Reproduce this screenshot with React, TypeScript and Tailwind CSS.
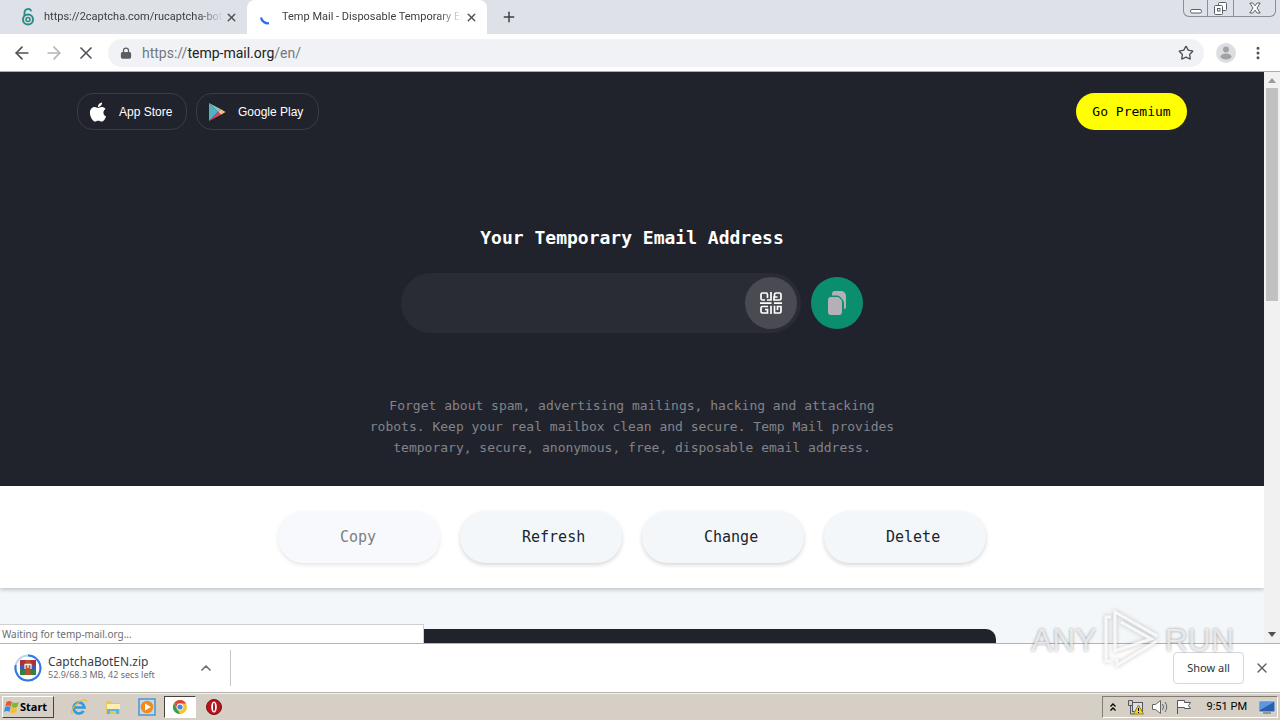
import type { ReactNode } from "react";
import { ArrowLeft, ArrowRight, ChevronUp, Lock, MoreVertical, Plus, Star, X } from "lucide-react";
import { FaApple } from "react-icons/fa";

function PadlockFavicon() {
  return (
    <svg viewBox="0 0 16 18" className="h-[18px] w-4 shrink-0" fill="none" stroke="#2b8c86">
      <path d="M4.500 8V4.500a3.500 3.500 0 0 1 6.800-1.200" strokeWidth="1.800" />
      <circle cx="8" cy="11.500" r="5" strokeWidth="2" />
      <circle cx="8" cy="11.500" r="2" strokeWidth="1.600" />
    </svg>
  );
}

function LoadingArc() {
  return (
    <svg viewBox="0 0 16 16" className="size-4 shrink-0" fill="none">
      <path d="M3 8.500A7 7 0 0 0 11 14.200" stroke="#2a6ff0" strokeWidth="2.200" />
    </svg>
  );
}

function PlayIcon() {
  return (
    <svg viewBox="0 0 18 20" className="h-5 w-[18px]">
      <path d="M1 1v18l9-9z" fill="#4fb3c4" />
      <path d="M1 1l12 6.200-3 2.800z" fill="#7fc6c2" />
      <path d="M13 7.200l4.500 2.800-4.500 2.800-3-2.800z" fill="#f3c07a" />
      <path d="M1 19l12-6.200-3-2.800z" fill="#dc4668" />
    </svg>
  );
}

function QrIcon() {
  return (
    <svg viewBox="0 0 22 22" className="size-[22px]" fill="none" stroke="#fff" strokeWidth="1.700">
      <path d="M5 8H2.500A1.500 1.500 0 0 1 1 6.500V2.500A1.500 1.500 0 0 1 2.500 1h3.500A1.500 1.500 0 0 1 7.500 2.500V6" />
      <path d="M11 0v8H7" />
      <path d="M14.500 5V2.500A1.500 1.500 0 0 1 16 1h3.500A1.500 1.500 0 0 1 21 2.500V6.500A1.500 1.500 0 0 1 19.500 8H14V5h3.500" />
      <path d="M0 11.200h11.500M14 11.200h8" />
      <path d="M8 14.500H2.500A1.500 1.500 0 0 0 1 16v3.500A1.500 1.500 0 0 0 2.500 21H7.500v-3.500H5" />
      <path d="M11 13.800V22" />
      <path d="M14.500 13.800V21h5a1.500 1.500 0 0 0 1.500-1.500V14.500h-3.500V18" />
    </svg>
  );
}

function CopyIcon() {
  return (
    <svg viewBox="0 0 20 26" className="h-[26px] w-5" fill="#b5b0b8">
      <path d="M5 5.500V4a3 3 0 0 1 3-3h5.500a5 5 0 0 1 5.500 5.500V17a2 2 0 0 1-2 2V13a6 6 0 0 0-2-4l-2-2.200a4 4 0 0 0-3-1.300z" />
      <path d="M4 7h6a4 4 0 0 1 2.800 1.200l1.200 1.400a4 4 0 0 1 1 2.600V22a3 3 0 0 1-3 3H4a3 3 0 0 1-3-3V10a3 3 0 0 1 3-3z" />
    </svg>
  );
}

function ArchiveIcon() {
  return (
    <svg viewBox="0 0 28 28" className="size-7 shrink-0">
      <circle cx="14" cy="14" r="12.500" fill="#fff" stroke="#bcd2f5" strokeWidth="2" />
      <path d="M14 1.500a12.500 12.500 0 1 1-12.200 9.500" fill="none" stroke="#3477e4" strokeWidth="2" />
      <rect x="6" y="6" width="16" height="5" fill="#a8323c" />
      <rect x="6" y="11" width="16" height="5" fill="#3d58b8" />
      <rect x="6" y="16" width="16" height="5" fill="#328140" />
      <rect x="11.500" y="6" width="5" height="15" fill="#b9512f" />
      <path d="M11 15v-4.500h6V15M14 10.500V14" fill="none" stroke="#f4efe8" strokeWidth="1.300" />
    </svg>
  );
}

function WindowsFlag() {
  return (
    <svg viewBox="0 0 16 16" className="size-4 shrink-0">
      <path d="M2.500 3C4.500 1.500 6 1.800 8 3L6.800 7.500C5 6.300 3.500 6.200 1.300 7.500z" fill="#e8582c" />
      <path d="M8.700 3.300c2 1 3.800 1 6-.3l-1.300 4.800c-2 1.200-4 1.200-5.900.1z" fill="#7ab83a" />
      <path d="M1.100 8.300c2-1.300 3.700-1.300 5.500-.1l-1.200 4.600C3.500 11.600 2 11.700 0 13z" fill="#3b8ed8" />
      <path d="M7.300 8.600c2 1.100 3.800 1 5.900-.1L12 13.100c-2 1.200-4 1.200-5.900.1z" fill="#f7bd2b" />
    </svg>
  );
}

function ExplorerIcon() {
  return (
    <svg viewBox="0 0 18 18" className="size-[18px]" fill="none">
      <path d="M4 9.500h10.500A5.500 5.500 0 1 0 13.600 13" stroke="#2f9ade" strokeWidth="2.600" />
      <path d="M2.500 15.500C0 14 4 7 9 4s8-3 7.500 0" stroke="#e8b93c" strokeWidth="1.200" />
    </svg>
  );
}

function FolderIcon() {
  return (
    <svg viewBox="0 0 18 18" className="size-[18px]">
      <path d="M2 3h5l1.500 2H16v11H2z" fill="#e9c65c" />
      <path d="M3 6h13v5H3z" fill="#fbeeb0" />
      <path d="M3 16v-5h12v5h-3v-3H6v3z" fill="#5fb3df" />
    </svg>
  );
}

function MediaIcon() {
  return (
    <svg viewBox="0 0 18 18" className="size-[18px]">
      <rect x="1" y="1" width="16" height="16" fill="#bcdcf5" stroke="#4f94cb" strokeWidth="1.500" />
      <circle cx="9" cy="9" r="6.300" fill="#f28a1c" />
      <path d="M7 5.500v7L13 9z" fill="#fff" />
    </svg>
  );
}

function ChromeIcon() {
  return (
    <svg viewBox="0 0 16 16" className="size-4">
      <circle cx="8" cy="8" r="7" fill="#f5c52b" />
      <path d="M1.900 4.600A7 7 0 0 1 14.100 4.600H8z" fill="#dc4335" />
      <path d="M1.900 4.500 5 9.800 8 15A7 7 0 0 1 1.900 4.500z" fill="#2f9e52" />
      <path d="M2 4.500h6v3.500H4.500z" fill="#dc4335" />
      <circle cx="8" cy="8" r="3.400" fill="#fff" />
      <circle cx="8" cy="8" r="2.600" fill="#4384ea" />
    </svg>
  );
}

function OperaIcon() {
  return (
    <svg viewBox="0 0 18 18" className="size-[18px]">
      <circle cx="9" cy="9" r="7.500" fill="#b3161c" stroke="#7c0c10" />
      <ellipse cx="9" cy="9" rx="2.800" ry="5.500" fill="#fff" />
      <ellipse cx="9" cy="9" rx="1" ry="4.300" fill="#a5161b" />
    </svg>
  );
}

function Tab({ icon, title, active }: { icon: ReactNode; title: string; active?: boolean }) {
  return (
    <div className={active ? "flex h-full w-60 items-center rounded-t-lg bg-white pr-2 pl-[11px]" : "flex h-full w-[247px] items-center pr-2 pl-5"}>
      {icon}
      <span className="ml-2 min-w-0 flex-1 overflow-hidden font-[Roboto] text-[11px] whitespace-nowrap text-[#3c4043] [mask-image:linear-gradient(to_right,black_86%,transparent)]">
        {title}
      </span>
      <button aria-label="Close tab" className="grid size-4 place-items-center text-[#4d5156]">
        <X size={13} strokeWidth={2.5} />
      </button>
    </div>
  );
}

function BrowserChrome() {
  return (
    <header className="shrink-0">
      <div className="flex h-[34px] items-start justify-between bg-[#dee1e8]">
        <div className="flex h-full items-center">
          <Tab icon={<PadlockFavicon />} title="https://2captcha.com/rucaptcha-bot" />
          <Tab active icon={<LoadingArc />} title="Temp Mail - Disposable Temporary Em" />
          <button aria-label="New tab" className="ml-3.5 text-[#3c4043]">
            <Plus size={16} strokeWidth={2.2} />
          </button>
        </div>
        <div className="mr-1 flex h-[17px] divide-x divide-[#8b8e95] rounded-b-md border border-t-0 border-[#8b8e95] text-[#5b5f66]">
          <button aria-label="Minimize" className="grid w-6 place-items-center">
            <svg viewBox="0 0 12 12" className="size-3" fill="#fff" stroke="currentColor"><rect x=".5" y="7.500" width="11" height="3.500" rx="1.500" /></svg>
          </button>
          <button aria-label="Restore" className="grid w-[26px] place-items-center">
            <svg viewBox="0 0 13 13" className="size-[13px]" fill="#fff" stroke="currentColor"><rect x="4.500" y=".5" width="8" height="8" rx="1" /><rect x=".5" y="3.500" width="8" height="9" rx="1" /><rect x="3.500" y="6.500" width="2.500" height="2.500" /></svg>
          </button>
          <button aria-label="Close" className="grid w-[41px] place-items-center">
            <svg viewBox="0 0 12 12" className="size-3" fill="#fff" stroke="currentColor"><path d="M.8 1h3L6 3.800 8.200 1h3L8 6l3.200 5h-3L6 8.200 3.800 11h-3L4 6z" /></svg>
          </button>
        </div>
      </div>
      <div className="flex h-[38px] items-center border-b border-[#a9adb0] bg-white pr-3.5 pl-3">
        <nav className="flex items-center gap-3 text-[#4d5156]">
          <button aria-label="Back"><ArrowLeft size={20} /></button>
          <button aria-label="Forward" className="text-[#b3b5b8]"><ArrowRight size={20} /></button>
          <button aria-label="Stop"><X size={20} /></button>
        </nav>
        <div className="ml-3 flex h-7 flex-1 items-center rounded-full bg-[#f0f2f5] pr-2.5 pl-3">
          <Lock size={12} strokeWidth={2.5} className="text-[#5a5e63] [&>rect]:fill-current" />
          <div className="ml-2.5 flex-1 font-[Roboto] text-sm text-[#74787d]">
            https://<span className="text-[#202124]">temp-mail.org</span>/en/
          </div>
          <button aria-label="Bookmark" className="text-[#4d5156]"><Star size={16} /></button>
        </div>
        <button aria-label="Profile" className="ml-3">
          <svg viewBox="0 0 20 20" className="size-5"><circle cx="10" cy="10" r="10" fill="#dddedf" /><circle cx="10" cy="6.500" r="3" fill="#a0a2a4" /><ellipse cx="10" cy="13.500" rx="5.500" ry="3" fill="#a0a2a4" /></svg>
        </button>
        <button aria-label="Menu" className="ml-3.5 text-[#4d5156]"><MoreVertical size={16} strokeWidth={2.5} /></button>
      </div>
    </header>
  );
}

function Hero() {
  return (
    <section className="flex h-[414px] shrink-0 flex-col bg-[#21232c] px-[77px] pt-[21px]">
      <div className="flex items-center justify-between">
        <div className="flex gap-[9px] font-['Liberation_Sans'] text-xs text-white">
          <a href="#app-store" className="flex h-[37px] w-[110px] items-center gap-2.5 rounded-2xl border border-[#393c45] pl-[9px]">
            <FaApple size={22} />App Store
          </a>
          <a href="#google-play" className="flex h-[37px] w-[123px] items-center gap-3 rounded-2xl border border-[#393c45] pl-[11px]">
            <PlayIcon />Google Play
          </a>
        </div>
        <button className="h-[37px] w-[111px] rounded-full bg-[#ffff00] text-[13px] text-black">Go Premium</button>
      </div>
      <h1 className="mt-24 text-center text-[18px] leading-6 font-bold text-white">Your Temporary Email Address</h1>
      <div className="mt-[23px] flex items-center justify-center gap-2.5">
        <div className="flex h-[60px] w-[400px] items-center rounded-full bg-[#2a2c35] pr-1 pl-8">
          <input aria-label="Temporary email" readOnly className="min-w-0 flex-1 bg-transparent text-white outline-none" />
          <button aria-label="QR code" className="grid size-[52px] place-items-center rounded-full bg-[#494a52]"><QrIcon /></button>
        </div>
        <button aria-label="Copy address" className="grid size-[52px] place-items-center rounded-full bg-[#0b8e6e]"><CopyIcon /></button>
      </div>
      <p className="mx-auto mt-[62px] max-w-[540px] text-center text-[13px] leading-[21px] text-[#82848b]">
        Forget about spam, advertising mailings, hacking and attacking robots. Keep your real mailbox clean and secure. Temp Mail provides temporary, secure, anonymous, free, disposable email address.
      </p>
    </section>
  );
}

function Actions() {
  const base = "h-[52px] w-[162px] rounded-[26px] pl-[62px] text-left text-[15px]";
  const enabled = "bg-[#f4f7fa] text-[#20242c] shadow-[0_2px_4px_rgba(0,0,0,0.16)]";
  return (
    <section className="relative flex h-[102px] shrink-0 items-center justify-center gap-5 bg-white shadow-[0_2px_4px_rgba(0,0,0,0.2)]">
      <button disabled className={`${base} bg-[#f8f9fc] text-[#7b7d82] shadow-[0_2px_4px_rgba(0,0,0,0.1)]`}>Copy</button>
      <button className={`${base} ${enabled}`}>Refresh</button>
      <button className={`${base} ${enabled}`}>Change</button>
      <button className={`${base} ${enabled}`}>Delete</button>
    </section>
  );
}

function Scrollbar() {
  return (
    <div className="flex w-4 shrink-0 flex-col items-center bg-[#f1f1f1]">
      <svg viewBox="0 0 16 16" className="size-4"><path d="M4 11l4-5 4 5z" fill="#9a9a9a" /></svg>
      <div className="h-[213px] w-3 bg-[#c1c1c1]" />
      <svg viewBox="0 0 16 16" className="mt-auto size-4"><path d="M4 5l4 5 4-5z" fill="#505050" /></svg>
    </div>
  );
}

function Watermark() {
  return (
    <div className="pointer-events-none absolute right-[46px] bottom-[49px] flex items-center gap-1.5 font-['Liberation_Sans',sans-serif] text-[32px] leading-8 text-white/70 [text-shadow:0_0_3px_rgba(0,0,0,0.4)]">
      <span>ANY</span>
      <svg viewBox="0 0 56 62" className="h-[62px] w-14 [filter:drop-shadow(0_0_2px_rgba(0,0,0,0.3))]" fill="none" stroke="#fff" strokeWidth="3" strokeOpacity=".8">
        <path d="M54 27L12 3v39l36-12L18 13M54 32L14 56v-6M8 8H3v44h5" />
      </svg>
      <span>RUN</span>
    </div>
  );
}

function DownloadBar() {
  return (
    <div className="flex h-[50px] shrink-0 items-center border-y border-[#b3b3b0] bg-white">
      <div className="flex h-9 w-[231px] items-center border-r border-[#c6c6c6] pr-4 pl-3.5">
        <ArchiveIcon />
        <div className="ml-1.5 flex-1 whitespace-nowrap">
          <div className="text-xs leading-[14px] text-[#3c4043]">CaptchaBotEN.zip</div>
          <div className="text-[9px] leading-3 text-[#6b6e72]">52.9/68.3 MB, 42 secs left</div>
        </div>
        <button aria-label="Download options" className="text-[#6b6e72]"><ChevronUp size={16} strokeWidth={2.5} /></button>
      </div>
      <button className="ml-auto h-8 w-[71px] rounded border border-[#d5d7da] text-[11px] text-[#303336]">Show all</button>
      <button aria-label="Close downloads" className="mr-2.5 ml-2.5 text-[#606468]"><X size={16} strokeWidth={2.2} /></button>
    </div>
  );
}

function Taskbar() {
  return (
    <footer className="flex h-[27px] shrink-0 items-center border-t border-[#f5f3ee] bg-[#d5cfc6] pl-0.5">
      <button className="flex h-[22px] w-[52px] items-center border border-t-white border-r-[#46423d] border-b-[#46423d] border-l-white pl-px text-[11px] font-bold text-black">
        <WindowsFlag />Start
      </button>
      <div className="ml-2 flex items-center">
        <button aria-label="Internet Explorer" className="grid w-[34px] place-items-center"><ExplorerIcon /></button>
        <button aria-label="File Explorer" className="grid w-[34px] place-items-center"><FolderIcon /></button>
        <button aria-label="Media Player" className="grid w-[34px] place-items-center"><MediaIcon /></button>
        <button aria-label="Chrome" className="grid h-[22px] w-8 place-items-center border border-t-[#46423d] border-r-white border-b-white border-l-[#46423d] bg-white"><ChromeIcon /></button>
        <button aria-label="Opera" className="grid w-9 place-items-center"><OperaIcon /></button>
      </div>
      <div className="mr-0.5 ml-auto flex h-[22px] items-center border border-t-[#807b74] border-r-white border-b-white border-l-[#807b74] pr-0.5 pl-1.5 text-[11px] text-black">
        <svg viewBox="0 0 8 10" className="h-2.5 w-2" fill="none" stroke="#000" strokeWidth="1.300"><path d="M1.500 4.500L4 2l2.500 2.500M1.500 8.500L4 6l2.500 2.500" /></svg>
        <svg viewBox="0 0 18 16" className="ml-2.5 h-4 w-[18px]" stroke="#55585c"><rect x="5.500" y="3.500" width="10" height="9" fill="#d8dfe8" /><path d="M1.500 1.500h4v5h-4zM3.500 6v9h4" fill="none" /><path d="M11.500 6l5 9h-10z" fill="#f5d324" stroke="#9a8312" /><path d="M11.500 9v3M11.500 13v1" stroke="#000" /></svg>
        <svg viewBox="0 0 18 16" className="ml-1.5 h-4 w-[18px]" fill="#fff" stroke="#62666a"><path d="M1.500 5.500h3l5-4v13l-5-4h-3z" /><path d="M11.500 5q2 3 0 6M14 3q3.500 5 0 10" fill="none" /></svg>
        <svg viewBox="0 0 18 16" className="ml-1.5 h-4 w-[18px]" fill="#fff" stroke="#55585c"><path d="M2.500 15V1.500h7v2h6l-2 3 2 3h-6v-1h-7" /></svg>
        <span className="ml-3.5 font-[Roboto] whitespace-nowrap">9:51 PM</span>
        <svg viewBox="0 0 16 14" className="ml-3 h-3.5 w-4"><rect x="0" y="1" width="16" height="11" fill="#2a5fb0" stroke="#d6e4f5" /><path d="M1 2h14L1 10z" fill="#5d97dc" /><path d="M4 13h8" stroke="#555" /></svg>
      </div>
    </footer>
  );
}

export default function App() {
  return (
    <div className="relative flex h-screen flex-col overflow-hidden bg-white font-['Noto_Sans',sans-serif]">
      <BrowserChrome />
      <div className="relative flex min-h-0 flex-1">
        <main className="flex min-w-0 flex-1 flex-col overflow-hidden bg-[#f4f7fa] font-['DejaVu_Sans_Mono',monospace]">
          <Hero />
          <Actions />
          <div className="mx-auto mt-[41px] h-40 w-[728px] shrink-0 rounded-t-[10px] bg-[#21232c]" />
        </main>
        <Scrollbar />
        <div className="absolute bottom-0 left-0 flex h-[19px] w-[424px] items-center border-t border-r border-[#cfd0d2] bg-white pl-0.5 text-[10px] text-[#6b6e72]">
          Waiting for temp-mail.org...
        </div>
      </div>
      <DownloadBar />
      <Taskbar />
      <Watermark />
    </div>
  );
}
